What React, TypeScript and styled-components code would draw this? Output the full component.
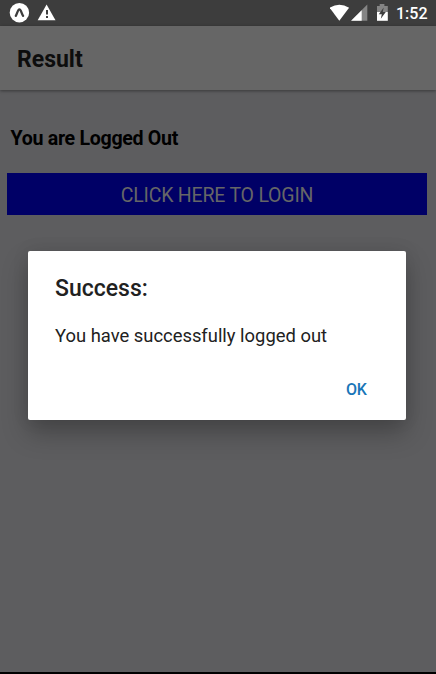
import React from "react";
import styled, { createGlobalStyle } from "styled-components";

const GlobalStyle = createGlobalStyle`
  * { box-sizing: border-box; }
  html, body { margin: 0; padding: 0; background: #000; }
  body { font-family: Roboto, "Liberation Sans", sans-serif; }
`;

const Screen = styled.div`
  position: relative;
  display: flex;
  flex-direction: column;
  width: 436px;
  height: 674px;
  overflow: hidden;
  background: #5d5d5f;
  border-bottom: 2px solid #000;
`;

const StatusBar = styled.div`
  flex: none;
  height: 26px;
  display: flex;
  justify-content: space-between;
  background: #3d3d3d;
  color: #fff;
`;

const StatusGroup = styled.div`
  display: flex;
  svg { display: block; }
`;

const Clock = styled.span`
  width: 40px;
  padding-top: 4px;
  font-size: 16px;
  font-weight: 500;
  line-height: 19px;
`;

const Header = styled.header`
  flex: none;
  height: 64px;
  display: flex;
  align-items: center;
  padding: 4px 17px 0;
  background: #666;
  box-shadow: 0 1px 3px rgba(0, 0, 0, 0.4);
  z-index: 1;
`;

const HeaderTitle = styled.h1`
  margin: 0;
  font-size: 23px;
  font-weight: 700;
  line-height: 28px;
  color: #0d0d0d;
`;

const Content = styled.main`
  flex: 1;
  display: flex;
  flex-direction: column;
  padding: 36px 9px 0 7px;
`;

const Message = styled.p`
  margin: 0 0 21px;
  padding-left: 3.5px;
  font-size: 19.6px;
  font-weight: 700;
  letter-spacing: -0.3px;
  line-height: 26px;
  color: #000;
`;

const LoginButton = styled.button`
  height: 42px;
  padding: 3px 0 0;
  border: 0;
  background: #000066;
  color: #666;
  font: 400 19.5px/24px Roboto, sans-serif;
  letter-spacing: -0.2px;
`;

const Overlay = styled.div`
  position: absolute;
  inset: 0;
  z-index: 2;
  padding: 251px 29.5px 0 28px;
`;

const Dialog = styled.section`
  width: 378.4px;
  height: 169.3px;
  display: flex;
  flex-direction: column;
  padding: 23px 27px 0;
  border-radius: 2px;
  background: #fff;
  color: #212121;
  box-shadow: 0 13px 26px rgba(0, 0, 0, 0.26), 0 0 18px rgba(0, 0, 0, 0.08);
`;

const DialogTitle = styled.h2`
  margin: 0;
  font-size: 23px;
  font-weight: 500;
  line-height: 30px;
`;

const DialogText = styled.p`
  margin: 19px 0 0;
  font-size: 18.4px;
  line-height: 26px;
`;

const DialogAction = styled.button`
  align-self: flex-end;
  margin: 30px 12.8px 0 0;
  padding: 0;
  border: 0;
  background: transparent;
  color: #1976b8;
  font: 500 16px/22px Roboto, sans-serif;
  letter-spacing: -0.3px;
`;

function NotificationIcons() {
  return (
    <svg width="64" height="26" viewBox="0 0 64 26" fill="#fff">
      <circle cx="19.4" cy="12.7" r="9.7" />
      <path d="M15.8 15.9C17.1 14 17.8 9.4 19.4 9.4S21.7 14 23.1 15.9" fill="none" stroke="#3d3d3d" strokeWidth="2.3" strokeLinecap="round" />
      <path d="M46.6 4.4L55.5 20.2H37.7Z" />
      <path d="M46 10h2v4.5h-2zM46 16h2v2h-2z" fill="#3d3d3d" />
    </svg>
  );
}

function SystemIcons() {
  return (
    <svg width="66" height="26" viewBox="0.6 0 66 26" fill="#fff">
      <path d="M.2 7.8Q10 1.8 19.7 7.8L9.9 20.7Z" />
      <path d="M21.7 20.8L37.9 4.6V20.8Z" fill="#858585" />
      <path d="M21.7 20.8L32.3 10.2V20.8Z" />
      <path d="M47.6 6h2.7V4h4.7v2H58.4v6H47.6Z" fill="#858585" />
      <path d="M47.6 12h10.8v8.8H47.6Z" />
      <path d="M54.3 7.6L49.4 14.2h3L51.4 18.8L56.4 12.1h-3Z" fill="#3d3d3d" />
    </svg>
  );
}

export default function App() {
  return (
    <>
      <GlobalStyle />
      <Screen>
        <StatusBar>
          <StatusGroup><NotificationIcons /></StatusGroup>
          <StatusGroup><SystemIcons /><Clock>1:52</Clock></StatusGroup>
        </StatusBar>
        <Header><HeaderTitle>Result</HeaderTitle></Header>
        <Content>
          <Message>You are Logged Out</Message>
          <LoginButton>CLICK HERE TO LOGIN</LoginButton>
        </Content>
        <Overlay>
          <Dialog role="dialog" aria-modal="true">
            <DialogTitle>Success:</DialogTitle>
            <DialogText>You have successfully logged out</DialogText>
            <DialogAction>OK</DialogAction>
          </Dialog>
        </Overlay>
      </Screen>
    </>
  );
}
